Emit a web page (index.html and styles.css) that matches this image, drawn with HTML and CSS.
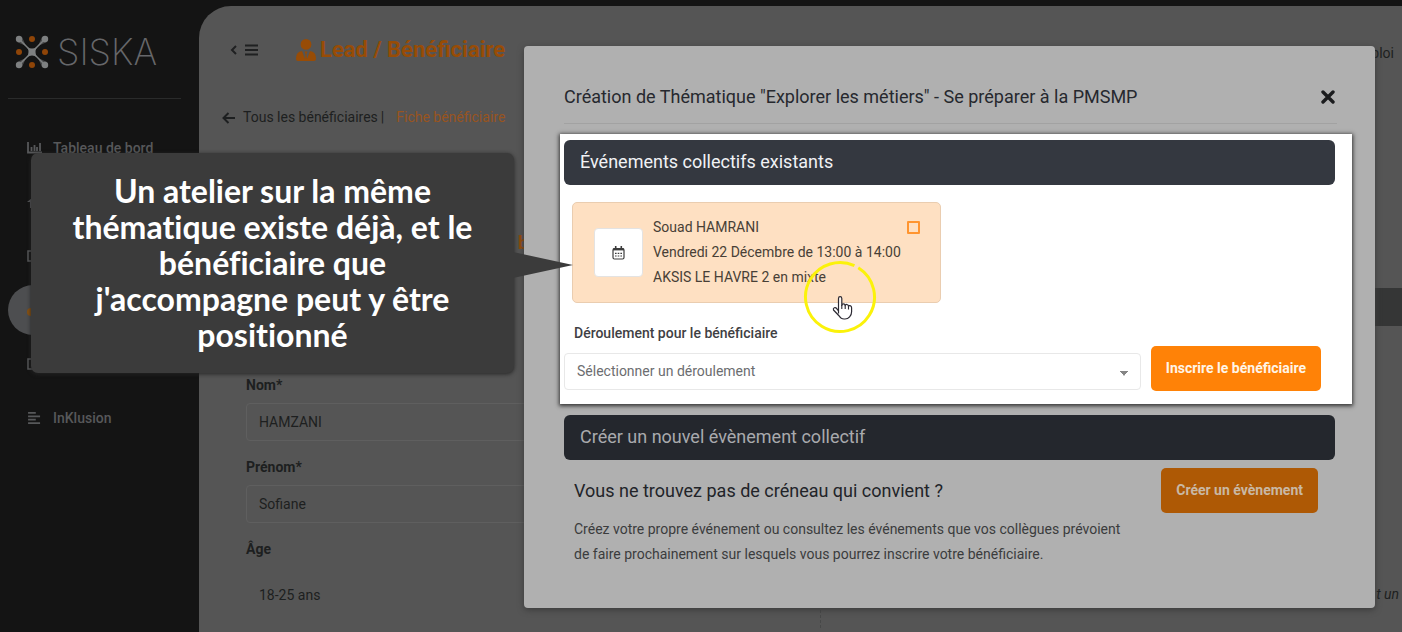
FILE: index.html
```html
<!DOCTYPE html>
<html lang="fr">
<head>
<meta charset="utf-8">
<title>Lead / Bénéficiaire</title>
<link rel="stylesheet" href="styles.css">
</head>
<body>
<div class="app">
  <aside class="sidebar">
    <div class="brand">
      <svg class="brand-mark" viewBox="0 0 34 34" width="34" height="34">
        <g stroke="#7e8081" fill="none"><path d="M4 4L30 30M30 4L4 30" stroke-width="1.5"/></g>
        <g fill="#7e8081"><circle cx="4" cy="4" r="3.2"/><circle cx="30" cy="4" r="3.2"/><circle cx="4" cy="30" r="3.2"/><circle cx="30" cy="30" r="3.2"/><path d="M12 12Q17 15 22 12Q19 17 22 22Q17 19 12 22Q15 17 12 12"/><path d="M2 7L7 2L11 11ZM27 2L32 7L23 11ZM2 27L7 32L11 23ZM27 32L32 27L23 23Z" opacity=".5"/></g>
        <g fill="#8f4508"><circle cx="17" cy="4" r="3"/><circle cx="4" cy="17" r="3"/><circle cx="30" cy="17" r="3"/><circle cx="17" cy="30" r="3"/></g>
      </svg>
      <span class="brand-name">SISKA</span>
    </div>
    <nav class="menu">
      <a class="menu-item" href="#"><svg class="icon" viewBox="0 0 15 12"><path d="M1 0v10.500h14M4.500 9V5M7.500 9V3M10 9V5M13 9V1" fill="none" stroke="currentColor" stroke-width="1.800"/></svg>Tableau de bord</a>
      <a class="menu-item" href="#"><svg class="icon" viewBox="0 0 15 12"><path d="M0 6L7.500 0L15 6H13v6H3V6Z" fill="currentColor"/></svg></a>
      <a class="menu-item" href="#"><svg class="icon" viewBox="0 0 15 12"><path d="M1 1h13v10H1z" fill="none" stroke="currentColor" stroke-width="1.500"/></svg></a>
      <a class="menu-item active" href="#"><svg class="icon" viewBox="0 0 15 12"><circle cx="4" cy="8" r="4" fill="currentColor"/></svg></a>
      <a class="menu-item" href="#"><svg class="icon" viewBox="0 0 15 12"><path d="M1 1h13v10H1z" fill="none" stroke="currentColor" stroke-width="1.500"/></svg></a>
      <a class="menu-item" href="#"><svg class="icon" viewBox="0 0 15 14"><path d="M0 1h9M0 5h14M0 9h9M0 13h14" stroke="currentColor" stroke-width="2"/></svg>InKlusion</a>
    </nav>
  </aside>

  <main class="main">
    <header class="topbar">
      <button class="toggle" type="button">
        <svg viewBox="0 0 28 12" width="28" height="12"><path d="M6 2L2 6l4 4" fill="none" stroke="currentColor" stroke-width="2"/><path d="M15 1.500h13M15 6h13M15 10.500h13" stroke="currentColor" stroke-width="2"/></svg>
      </button>
      <h1 class="page-title">
        <svg viewBox="0 0 20 22" width="20" height="22"><path d="M10 0a5.200 5.200 0 0 1 0 10.800A5.200 5.200 0 0 1 10 0ZM6 12l3 8 .5-5L8.500 12.500h3L10.500 15l.5 5 3-8q6 1 6 7v1q0 2-2 2H2q-2 0-2-2v-1q0-6 6-7Z" fill="currentColor"/></svg>Lead / Bénéficiaire
      </h1>
      <span class="account">Emploi</span>
    </header>
    <div class="crumbs">
      <svg viewBox="0 0 13 12" width="13" height="12"><path d="M6.500 1L1.500 6l5 5M1.500 6H13" fill="none" stroke="currentColor" stroke-width="2"/></svg>
      <a href="#">Tous les bénéficiaires</a><span>|</span><a class="current" href="#">Fiche bénéficiaire</a>
    </div>
    <div class="columns">
      <form class="profile">
        <div class="profile-head"><span>b</span></div>
        <label for="nom">Nom*</label>
        <input id="nom" type="text" value="HAMZANI">
        <label for="prenom">Prénom*</label>
        <input id="prenom" type="text" value="Sofiane">
        <label for="age">Âge</label>
        <input id="age" class="plain" type="text" value="18-25 ans">
      </form>
      <section class="history">
        <div class="history-bar"></div>
        <p class="history-note">t un</p>
      </section>
    </div>
  </main>
</div>

<div class="modal" role="dialog">
  <header class="modal-head">
    <h2>Création de Thématique "Explorer les métiers" - Se préparer à la PMSMP</h2>
    <button class="close" type="button"><svg viewBox="0 0 14 14" width="14" height="14"><path d="M2 2l10 10M12 2L2 12" stroke="currentColor" stroke-width="3.400" stroke-linecap="round"/></svg></button>
  </header>

  <section class="spotlight">
    <h3 class="band">Événements collectifs existants</h3>
    <div class="event">
      <span class="event-icon">
        <svg viewBox="0 0 13 14" width="13" height="14"><rect x="1" y="2.500" width="11" height="10.500" rx="1.500" fill="none" stroke="currentColor" stroke-width="1.200"/><path d="M1 3.400h11" stroke="currentColor" stroke-width="2"/><path d="M3.700 0v3M9.300 0v3" stroke="currentColor" stroke-width="1.600"/><path d="M3 7.300h7M3 10h7" stroke="currentColor" stroke-width="1.200" stroke-dasharray="1.600 1.100"/></svg>
      </span>
      <label class="event-text" for="event-pick">Souad HAMRANI<br>Vendredi 22 Décembre de 13:00 à 14:00<br>AKSIS LE HAVRE 2 en mixte</label>
      <input id="event-pick" class="pick" type="checkbox">
      <svg class="pointer" viewBox="0 0 74 74" width="74" height="74">
        <circle cx="37" cy="37" r="34.500" fill="none" stroke="#fbf20a" stroke-width="3" stroke-dasharray="212 5" transform="rotate(-58 37 37)"/>
        <path d="M35.500 55.500V40.500q0-1.800 1.600-1.800t1.700 1.800v7q.2-1.700 1.700-1.700t1.700 1.900q.4-1.400 1.800-1.200t1.500 1.900q.4-1 1.600-.8 1.500.3 1.500 2.200v4q0 3-2 5-1.800 2.200-4.600 2.200h-1q-3 0-4.800-3L30.500 52q-.6-1.600.8-2.200 1.500-.5 2.600 1l1.600 2.200" transform="translate(0 -2)" fill="#fff" fill-opacity=".8" stroke="#2c2a33" stroke-width="1.200" stroke-linejoin="round"/>
        <path d="M38.800 45v4M42.200 45.500v3.500M45.500 46.500v3" stroke="#2c2a33" stroke-width="1.100"/>
      </svg>
    </div>
    <label class="field-label" for="flow">Déroulement pour le bénéficiaire</label>
    <div class="enroll">
      <select id="flow"><option>Sélectionner un déroulement</option></select>
      <button class="btn" type="button">Inscrire le bénéficiaire</button>
    </div>
  </section>

  <section class="create">
    <h3 class="band dim">Créer un nouvel évènement collectif</h3>
    <div class="create-row">
      <div class="create-text">
        <h4>Vous ne trouvez pas de créneau qui convient ?</h4>
        <p>Créez votre propre événement ou consultez les événements que vos collègues prévoient de faire prochainement sur lesquels vous pourrez inscrire votre bénéficiaire.</p>
      </div>
      <button class="btn dim" type="button">Créer un évènement</button>
    </div>
  </section>
</div>

<div class="callout">
  <p>Un atelier sur la même thématique existe déjà, et le bénéficiaire que j'accompagne peut y être positionné</p>
  <svg class="tail" viewBox="0 0 60 26" width="60" height="26"><path d="M0 0L60 13L0 26Z" fill="#3b3b3b"/></svg>
</div>
</body>
</html>
```

FILE: styles.css
```css
* { box-sizing: border-box; }
body { margin: 0; min-height: 100vh; background: #141414; color: #1d1f20; font: 14px/25px Roboto, "Liberation Sans", sans-serif; overflow: hidden; position: relative; }
h1, h2, h3, h4, p { margin: 0; font-weight: 400; }
a { color: inherit; text-decoration: none; }
button, input, select { font: inherit; color: inherit; }
button { border: 0; padding: 0; background: none; }
svg { display: block; flex: none; }

.app { display: grid; grid-template-columns: 199px 1fr; height: 100vh; }

.sidebar { padding: 34px 18px 0 8px; color: #57585a; overflow: hidden; }
.brand { display: flex; align-items: center; gap: 8px; height: 65px; padding: 0 0 28px 7px; border-bottom: 1px solid #2a2b2b; }
.brand-name { font: 200 36px/36px Inter, sans-serif; color: #66676a; }
.menu { display: flex; flex-direction: column; gap: 4px; padding-top: 24px; font-weight: 500; }
.menu-item { display: flex; align-items: center; gap: 11px; height: 50px; padding-left: 19px; }
.icon { width: 15px; height: 12px; }
.menu-item.active { width: 50px; border-radius: 25px; background: #4d4e50; color: #8a5210; }

.main { margin-top: 6px; border-radius: 32px 0 0 0; background: #555555; overflow: hidden; }
.topbar { display: flex; align-items: center; height: 88px; padding: 0 8px 0 31px; }
.toggle { width: 28px; margin-right: 38px; color: #1f2021; }
.page-title { display: flex; align-items: center; gap: 4px; font: 700 22px/28px Roboto, sans-serif; color: #984c06; }
.account { margin: 6px 0 0 auto; }
.crumbs { display: flex; align-items: center; gap: 8px; padding: 11px 0 0 23px; }
.crumbs span { margin-left: -5px; }
.crumbs .current { margin-left: 4px; color: #98541f; }
.columns { display: grid; grid-template-columns: 574px 1fr; padding-left: 47px; }
.profile { display: flex; flex-direction: column; }
.profile-head { display: flex; justify-content: flex-end; height: 243px; padding: 100px 292px 0 0; color: #984c06; font-weight: 700; font-size: 18px; }
.profile label { height: 25px; font-weight: 700; font-size: 14px; }
.profile input { height: 38px; margin: 5px 0 14px; padding: 0 12px; border: 1px solid #5f5f5f; border-radius: 4px; background: transparent; }
.profile .plain { border-color: transparent; margin-top: 14px; }
.history { padding-top: 158px; border-left: 1px dashed #474848; }
.history-bar { height: 38px; background: #353636; }
.history-note { padding: 256px 3px 0; text-align: right; font-style: italic; }

.modal { position: absolute; left: 524px; right: 27px; top: 46px; padding: 28px 23px 41px 36px; border-radius: 4px; background: #b0b0b0; box-shadow: 0 2px 6px #3c3c3c; }
.modal-head { display: flex; align-items: center; justify-content: space-between; height: 50px; margin: 0 15px 10px 4px; padding-bottom: 4px; border-bottom: 1px solid #a2a2a2; }
.modal-head h2 { font-size: 18px; color: #26282e; }
.close { margin-right: 2px; color: #1b1c1e; }

.spotlight { padding: 6px 17px 13px 4px; background: #fff; box-shadow: 0 1px 4px 1px #333; }
.band { height: 45px; padding: 0 16px; border-radius: 6px; background: #343840; color: #f1f2f5; font-size: 18px; line-height: 43px; }
.band.dim { background: #24272d; color: #a9aaad; }
.event { position: relative; display: flex; align-items: center; width: 369px; height: 101px; margin: 17px 0 0 8px; padding: 0 20px 0 21px; border: 1px solid #eacdb0; border-radius: 5px; background: #fee0c2; color: #483f36; }
.event-icon { display: grid; place-items: center; width: 49px; height: 49px; margin-right: 10px; border: 1px solid #e4e3e2; border-radius: 4px; background: #fff; color: #3c3c3c; }
.event-text { flex: 1; white-space: nowrap; }
.pick { appearance: none; align-self: flex-start; width: 13px; height: 13px; margin: 18px 0 0; border: 2px solid #ff9530; border-radius: 1px; }
.pointer { position: absolute; left: 230px; top: 57px; }
.field-label { display: block; margin: 18px 0 0 10px; font-weight: 500; color: #3f4043; }
.enroll { display: flex; align-items: center; gap: 10px; padding-right: 14px; }
.enroll select { flex: 1; height: 37px; margin-top: 6px; padding: 0 12px; border: 1px solid #e8e8e8; border-radius: 4px; color: #6c6d70; appearance: none; background: linear-gradient(to bottom right, #858585 50%, transparent 52%) right 12px top 17px / 4px 5px no-repeat, linear-gradient(to bottom left, #858585 50%, transparent 52%) right 16px top 17px / 4px 5px no-repeat, #fff; }
.btn { height: 45px; padding: 0 15px; border-radius: 5px; background: #ff8207; color: #fff5e8; font-weight: 700; white-space: nowrap; }
.btn.dim { background: #ae5905; color: #c9b8a4; }

.create { padding: 11px 17px 0 4px; }
.create-row { display: flex; align-items: flex-start; justify-content: space-between; padding: 8px 17px 0 10px; }
.create-text { width: 560px; color: #3b3c3d; }
.create-text h4 { margin: 10px 0 14px; font-size: 18px; color: #222429; }

.callout { position: absolute; left: 31px; top: 153px; width: 483px; padding: 20px 34px; border-radius: 7px; background: #3b3b3b; box-shadow: 0 1px 4px #242424; color: #fff; text-align: center; font: 32px/36px Lato, "Open Sans", sans-serif; font-variant-ligatures: none; }
.callout p { font-weight: 700; }
.tail { position: absolute; right: -59px; top: 99px; }
```
